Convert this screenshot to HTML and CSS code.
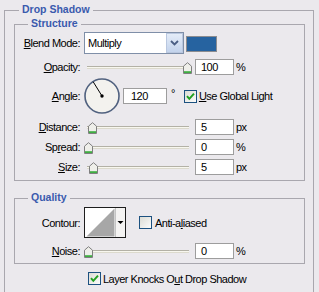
FILE: index.html
```html
<!DOCTYPE html>
<html lang="en">
  <head>
    <meta charset="UTF-8" />
    <meta name="viewport" content="width=device-width, initial-scale=1.0" />
    <title>Drop Shadow</title>
    <link rel="stylesheet" href="styles.css">
  </head>
  <body>
    <svg class="defs" width="0" height="0">
      <symbol id="thumb" viewBox="0 0 9 12">
        <path d="M0.5 11.5V4.2L4.5 0.7L8.5 4.2V11.5Z" fill="#efefea" stroke="#7f7f7f" />
        <rect x="1" y="9.2" width="7" height="1.8" fill="#3fae42" />
      </symbol>
      <symbol id="check" viewBox="0 0 11 11">
        <polyline points="2,5.2 4.3,7.8 9,2.6" fill="none" stroke="#21a121" stroke-width="2" />
      </symbol>
    </svg>

    <div class="panel panel-outer">
      <span class="panel-title">Drop Shadow</span>

      <div class="panel panel-inner panel-structure">
        <span class="panel-title">Structure</span>

        <div class="row row-blend">
          <label class="label"><u>B</u>lend Mode:</label>
          <div class="select">
            <span class="select-text">Multiply</span>
            <span class="select-button">
              <svg width="9" height="6" viewBox="0 0 9 6"><polyline points="1,1 4.5,4.5 8,1" fill="none" stroke="#4a5e84" stroke-width="1.8" /></svg>
            </span>
          </div>
          <span class="swatch"></span>
        </div>

        <div class="row row-opacity">
          <label class="label"><u>O</u>pacity:</label>
          <div class="slider">
            <span class="track"></span>
            <svg class="thumb" style="left: 99px"><use href="#thumb" /></svg>
          </div>
          <span class="field">100</span>
          <span class="unit">%</span>
        </div>

        <div class="row row-angle">
          <label class="label"><u>A</u>ngle:</label>
          <svg class="dial" width="36" height="36" viewBox="0 0 36 36">
            <circle cx="18" cy="18" r="17" fill="#f3f2ee" stroke="#50617f" stroke-width="1.6" />
            <line x1="18" y1="18" x2="9.2" y2="3.8" stroke="#000" stroke-width="1" />
            <circle cx="18" cy="18" r="1.7" fill="#000" />
          </svg>
          <span class="field field-angle">120</span>
          <span class="degree">°</span>
          <span class="checkbox checked"><svg><use href="#check" /></svg></span>
          <span class="check-label"><u>U</u>se Global Light</span>
        </div>

        <div class="row row-distance">
          <label class="label"><u>D</u>istance:</label>
          <div class="slider">
            <span class="track"></span>
            <svg class="thumb" style="left: 4px"><use href="#thumb" /></svg>
          </div>
          <span class="field">5</span>
          <span class="unit">px</span>
        </div>

        <div class="row">
          <label class="label">Sp<u>r</u>ead:</label>
          <div class="slider">
            <span class="track"></span>
            <svg class="thumb" style="left: 0px"><use href="#thumb" /></svg>
          </div>
          <span class="field">0</span>
          <span class="unit">%</span>
        </div>

        <div class="row">
          <label class="label"><u>S</u>ize:</label>
          <div class="slider">
            <span class="track"></span>
            <svg class="thumb" style="left: 5px"><use href="#thumb" /></svg>
          </div>
          <span class="field">5</span>
          <span class="unit">px</span>
        </div>
      </div>

      <div class="panel panel-inner panel-quality">
        <span class="panel-title">Quality</span>

        <div class="row row-contour">
          <label class="label">Contour:</label>
          <svg class="contour" width="42" height="31" viewBox="0 0 42 31">
            <rect x="0.5" y="0.5" width="41" height="30" fill="#fff" stroke="#1e1e1e" />
            <polygon points="2.5,29.5 30.5,1.5 30.5,29.5" fill="#a7a7a7" />
            <rect x="31" y="1" width="10" height="29" fill="#f4f3f2" />
            <line x1="31.5" y1="1" x2="31.5" y2="30" stroke="#c4c4c4" />
            <polygon points="33.5,14 39.5,14 36.5,17" fill="#000" />
          </svg>
          <span class="checkbox checkbox-anti"></span>
          <span class="check-label">Anti-a<u>l</u>iased</span>
        </div>

        <div class="row row-noise">
          <label class="label"><u>N</u>oise:</label>
          <div class="slider">
            <span class="track"></span>
            <svg class="thumb" style="left: 0px"><use href="#thumb" /></svg>
          </div>
          <span class="field">0</span>
          <span class="unit">%</span>
        </div>
      </div>

      <div class="row row-knockout">
        <span class="checkbox checked"><svg><use href="#check" /></svg></span>
        <span class="check-label">Layer Knocks O<u>u</u>t Drop Shadow</span>
      </div>
    </div>
  </body>
</html>
```

FILE: styles.css
```css
html,
body {
  height: 100%;
}
body {
  margin: 0;
  padding: 10px 0 0 4px;
  box-sizing: border-box;
  overflow: hidden;
  background: #ebe9ed;
  color: #000;
  font-family: "Liberation Sans", Arial, sans-serif;
  font-size: 11px;
  letter-spacing: -0.5px;
}
.defs {
  position: absolute;
}
u {
  text-underline-offset: 1px;
}

/* group boxes */
.panel {
  position: relative;
  border: 1px solid #a9a7ae;
}
.panel-title {
  position: absolute;
  top: -8px;
  left: 13px;
  padding: 0 3px;
  background: #ebe9ed;
  color: #3a5aad;
  font-size: 10.5px;
  font-weight: bold;
  line-height: 13px;
  letter-spacing: 0;
}
.panel-outer {
  width: 310px;
  box-sizing: border-box;
  padding: 13px 8px 40px 9px;
}
.panel-outer > .panel-title {
  left: 14px;
}
.panel-structure {
  padding-bottom: 5px;
}
.panel-quality {
  margin-top: 17px;
  padding-bottom: 4px;
}

/* rows */
.row {
  display: flex;
  align-items: center;
  height: 16px;
  margin-top: 4px;
}
.row-blend {
  height: 22px;
  margin-top: 7px;
}
.row-opacity,
.row-distance,
.row-noise {
  margin-top: 5px;
}
.row-angle {
  height: 36px;
  margin-top: 3px;
}
.row-contour {
  height: 31px;
  margin-top: 8px;
}
.row-knockout {
  height: 13px;
  margin: 8px 0 0 74px;
}
.label {
  flex: none;
  width: 65px;
  margin-right: 4px;
  text-align: right;
  white-space: nowrap;
}

/* blend mode combo */
.select {
  display: flex;
  width: 100px;
  height: 22px;
  box-sizing: border-box;
  border: 1px solid #7f8fa8;
  background: #fff;
}
.select-text {
  flex: 1;
  padding-left: 3px;
  line-height: 20px;
}
.select-button {
  display: flex;
  align-items: center;
  justify-content: center;
  width: 17px;
  box-sizing: border-box;
  border: 1px solid #b9c7df;
  background: linear-gradient(#e4ecf8, #c3d3ec);
}
.swatch {
  width: 31px;
  height: 16px;
  box-sizing: border-box;
  margin: 2px 0 0 2px;
  border: 1px solid #8b8c90;
  background: #2663a0;
}

/* sliders */
.slider {
  position: relative;
  width: 111px;
  height: 16px;
}
.track {
  position: absolute;
  left: 3px;
  right: 6px;
  top: 7px;
  height: 3px;
  box-sizing: border-box;
  border-top: 1px solid #b3b1a6;
  border-bottom: 1px solid #dcdacd;
  background: #f8f7ef;
}
.thumb {
  position: absolute;
  top: 3px;
  width: 9px;
  height: 12px;
}
.field {
  width: 39px;
  height: 16px;
  box-sizing: border-box;
  border: 1px solid #9d9d9d;
  background: #fff;
  padding-left: 5px;
  line-height: 14px;
}
.field-angle {
  width: 44px;
  margin-left: 3px;
  padding-left: 7px;
}
.unit {
  margin-left: 2px;
}
.degree {
  margin: -6px 0 0 4px;
}

/* checkboxes */
.checkbox {
  flex: none;
  width: 13px;
  height: 13px;
  box-sizing: border-box;
  border: 1px solid #1c5180;
  background: linear-gradient(135deg, #dcdcd5, #fcfcfb);
}
.checkbox svg {
  display: block;
  width: 11px;
  height: 11px;
}
.row-angle .checkbox {
  margin-left: 9px;
}
.checkbox-anti {
  margin-left: 13px;
}
.check-label {
  margin-left: 2px;
  white-space: nowrap;
}
.row-contour .check-label {
  margin-left: 3px;
}
```
